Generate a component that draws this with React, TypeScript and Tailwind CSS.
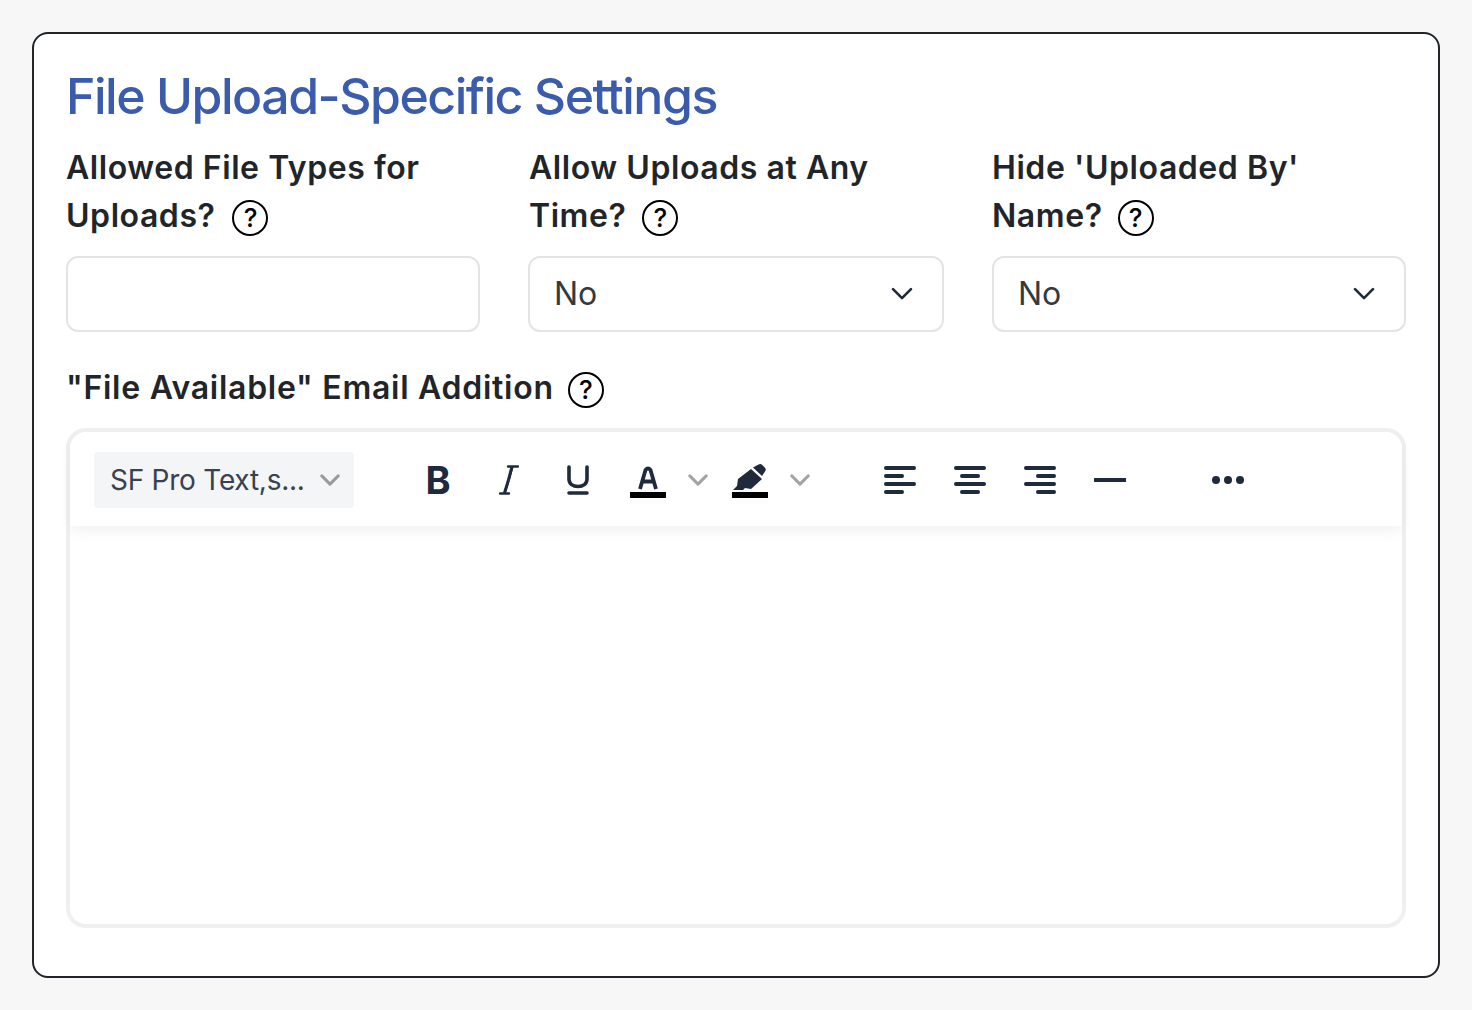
import React from "react";

const Help = ({ className = "" }: { className?: string }) => (
  <span className={`inline-flex h-[36px] w-[36px] shrink-0 items-center justify-center rounded-full border-2 border-black text-[26px] font-medium leading-none tracking-normal text-black ${className}`}>?</span>
);

const Chevron = ({ color = "#1f2937", w = 22, sw = 2.6 }: { color?: string; w?: number; sw?: number }) => (
  <svg width={w} height={w * 0.6} viewBox="0 0 22 13" fill="none" stroke={color} strokeWidth={sw * (22 / w)} strokeLinecap="round" strokeLinejoin="round">
    <path d="M2 2l9 9 9-9" />
  </svg>
);

const Field = ({ children, label, inset = "" }: { children?: React.ReactNode; label: React.ReactNode; inset?: string }) => (
  <div className="flex flex-col">
    <div className={`h-[96px] text-[32px] font-semibold leading-[48px] tracking-[0.56px] text-[#212529] ${inset}`}>{label}</div>
    <div className="mt-[16px] flex h-[76px] items-center justify-between rounded-[12px] border-2 border-[#e4e4e4] bg-white pl-[24px] pr-[29px] text-[32px] text-[#343a40]">
      {children}
    </div>
  </div>
);

const Lines = ({ bars }: { bars: [number, number][] }) => (
  <svg width="32" height="28" viewBox="0 0 32 28" fill="#1f2a3d">
    {bars.map(([x, w], i) => (
      <rect key={i} x={x} y={i * 8} width={w} height={4} rx={2} />
    ))}
  </svg>
);

export default function App() {
  return (
    <div className="min-h-[1010px] bg-[#f7f7f7] p-[32px] font-['Inter',sans-serif]">
      <div className="h-[946px] rounded-[16px] border-2 border-[#212529] bg-white px-[32px] pt-[32px]">
        <h1 className="text-[50px] font-medium leading-[60px] tracking-[-1.48px] text-[#3b5cad]">File Upload-Specific Settings</h1>
        <div className="mt-[18px] grid grid-cols-[414px_416px_414px] gap-x-[48px]">
          <Field label={<>Allowed File Types for<br /><span className="inline-flex items-center">Uploads?<Help className="ml-[17px] mt-[4px]" /></span></>} />
          <Field inset="pl-[1px]" label={<>Allow Uploads at Any<br /><span className="inline-flex items-center">Time?<Help className="ml-[16px] mt-[4px]" /></span></>}>
            <span>No</span><Chevron />
          </Field>
          <Field label={<>Hide 'Uploaded By'<br /><span className="inline-flex items-center">Name?<Help className="ml-[15px] mt-[4px]" /></span></>}>
            <span>No</span><Chevron />
          </Field>
        </div>
        <div className="mt-[30px] flex h-[52px] items-center text-[32px] font-semibold tracking-[0.73px] text-[#212529]">
          "File Available" Email Addition<Help className="ml-[14px] mt-[4px]" />
        </div>
        <div className="mt-[14px] h-[500px] rounded-[20px] border-4 border-[#f0f0f0] bg-white">
          <div className="flex h-[94px] items-center rounded-t-[16px] pl-[24px] pt-[2px] shadow-[0_6px_14px_rgba(0,0,0,0.05)]">
            <div className="flex h-[56px] w-[260px] items-center justify-between rounded-[4px] bg-[#f4f5f6] pl-[16px] pr-[14px] text-[28px] tracking-[-0.25px] text-[#374151]">
              <span>SF Pro Text,s...</span>
              <Chevron color="#9a9a9a" w={20} sw={3} />
            </div>
            <div className="ml-[70px] flex w-[28px] justify-center text-[38px] font-bold leading-none text-[#1f2a3d]">B</div>
            <svg className="ml-[47px]" width="20" height="30" viewBox="0 0 20 30" fill="none" stroke="#1f2a3d">
              <path d="M1 28.500h9M5.500 28.500L13.500 1.500M9 1.500h10" strokeWidth="2.4" strokeLinecap="round" />
              <path d="M9.500 15L13 1.500" strokeWidth="3" />
              <path d="M5.500 28L9.500 15" strokeWidth="3" />
            </svg>
            <svg className="ml-[47px]" width="24" height="30" viewBox="0 0 24 30" fill="none" stroke="#1f2a3d" strokeLinecap="round" strokeWidth="3.6">
              <path d="M3 2v12c0 5 4 7.500 9 7.500s9-2.500 9-7.500V2M3 28h18" />
            </svg>
            <div className="ml-[40px] flex h-[36px] w-[36px] flex-col items-center justify-end">
              <svg width="20" height="24" viewBox="0 0 20 24" fill="none" stroke="#1f2a3d" strokeWidth="3.8" strokeLinejoin="round">
                <path d="M2 23L7.500 4Q10 1 12.500 4L18 23M4.500 15.500h11" />
              </svg>
              <div className="mt-[2px] h-[6px] w-[36px] bg-black" />
            </div>
            <div className="ml-[22px]"><Chevron color="#a3a3a3" w={20} sw={3} /></div>
            <div className="ml-[24px] flex h-[36px] w-[36px] flex-col items-center justify-end">
              <svg width="36" height="28" viewBox="0 0 36 28" fill="#1f2a3d">
                <path d="M1 26l4-4 1-7L19 5l11 10-11 10-6-1-2 2z" />
                <path d="M21 3.500l5.500-3c1.500-.8 2.500-.6 3.500.3l3 3c1 1.200 1 2.400 0 3.700l-3 4.500z" />
              </svg>
              <div className="h-[6px] w-[36px] bg-black" />
            </div>
            <div className="ml-[22px]"><Chevron color="#a3a3a3" w={20} sw={3} /></div>
            <div className="ml-[74px]"><Lines bars={[[0, 32], [0, 20], [0, 32], [0, 20]]} /></div>
            <div className="ml-[38px]"><Lines bars={[[0, 32], [6, 20], [0, 32], [6, 20]]} /></div>
            <div className="ml-[38px]"><Lines bars={[[0, 32], [12, 20], [0, 32], [12, 20]]} /></div>
            <div className="ml-[38px] h-[4px] w-[32px] bg-[#1f2a3d]" />
            <svg className="ml-[86px]" width="32" height="8" viewBox="0 0 32 8" fill="#1f2a3d">
              <circle cx="4" cy="4" r="4" /><circle cx="16" cy="4" r="4" /><circle cx="28" cy="4" r="4" />
            </svg>
          </div>
        </div>
      </div>
    </div>
  );
}
